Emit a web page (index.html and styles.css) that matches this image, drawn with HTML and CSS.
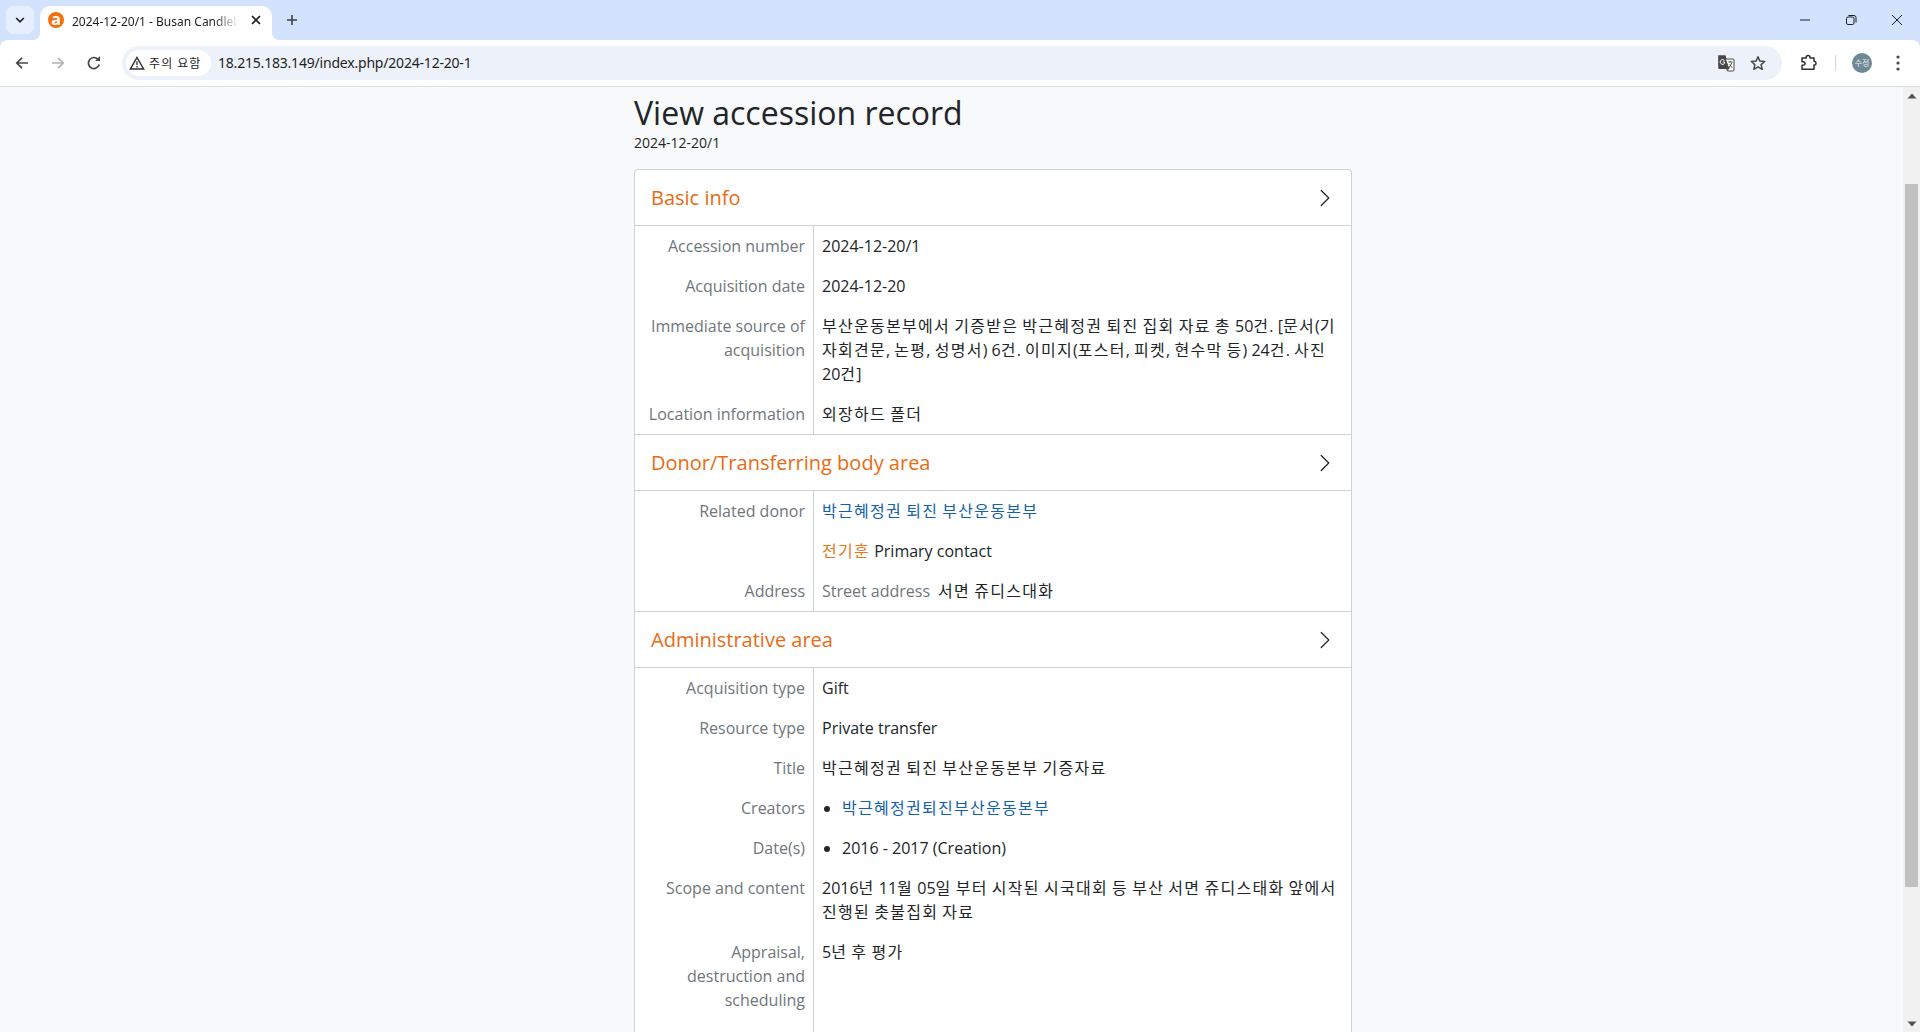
FILE: index.html
```html
<!DOCTYPE html>
<html lang="ko">
<head>
<meta charset="utf-8">
<title>2024-12-20/1 - Busan Candlelight</title>
<link rel="stylesheet" href="styles.css">
</head>
<body>
<header class="browser">
  <div class="tabstrip">
    <button class="tab-search" aria-label="탭 검색">
      <svg width="12" height="12" viewBox="0 0 12 12"><path d="M2.2 4 6 7.8 9.8 4" fill="none" stroke="#1f1f1f" stroke-width="1.7"/></svg>
    </button>
    <div class="tab">
      <span class="favicon">a</span>
      <span class="tab-title">2024-12-20/1 - Busan Candleli</span>
      <svg class="tab-close" width="12" height="12" viewBox="0 0 12 12"><path d="M2 2 10 10M10 2 2 10" stroke="#1f1f1f" stroke-width="1.7"/></svg>
    </div>
    <svg class="new-tab" width="14" height="14" viewBox="0 0 14 14"><path d="M7 2V12M2 7H12" stroke="#3c4043" stroke-width="1.6"/></svg>
    <div class="window-controls">
      <svg width="12" height="12" viewBox="0 0 12 12"><path d="M1 6H11" stroke="#1f1f1f" stroke-width="1"/></svg>
      <svg width="12" height="12" viewBox="0 0 12 12"><rect x="1.5" y="3" width="7.5" height="7.5" rx="1.5" fill="none" stroke="#1f1f1f"/><path d="M3.5 1.5H9Q11 1.5 11 3.5V8.5" fill="none" stroke="#1f1f1f"/></svg>
      <svg width="14" height="14" viewBox="0 0 14 14"><path d="M2 2 12 12M12 2 2 12" stroke="#1f1f1f" stroke-width="1"/></svg>
    </div>
  </div>
  <div class="toolbar">
    <div class="nav-buttons">
      <svg width="16" height="16" viewBox="0 0 16 16"><path d="M14 8H3M8 2.8 2.8 8 8 13.2" fill="none" stroke="#474747" stroke-width="1.7"/></svg>
      <svg width="16" height="16" viewBox="0 0 16 16"><path d="M2 8H13M8 2.8 13.2 8 8 13.2" fill="none" stroke="#b0b3b6" stroke-width="1.7"/></svg>
      <svg width="16" height="16" viewBox="0 0 16 16"><path d="M13.2 9.6A5.5 5.5 0 1 1 12 4.3" fill="none" stroke="#474747" stroke-width="1.7"/><path d="M9.2 5.9H14V1.1Z" fill="#474747"/></svg>
    </div>
    <div class="omnibox">
      <div class="chip">
        <svg width="16" height="14" viewBox="0 0 16 14"><path d="M8 1.5 14.6 13H1.4Z" fill="none" stroke="#303030" stroke-width="1.5"/><path d="M8 5.3V9M8 10V11.5" stroke="#303030" stroke-width="1.3"/></svg>
        <span class="chip-text">주의 요함</span>
      </div>
      <span class="url">18.215.183.149/index.php/2024-12-20-1</span>
      <div class="omni-actions">
        <svg width="18" height="18" viewBox="0 0 18 18"><path d="M1.2 1.2H8.5L12 15H2.5Q1.2 15 1.2 13.7Z" fill="#474747"/><path d="M8.3 5H16Q17 5 17 6V16Q17 17 16 17H10.5L9.8 15H12Z" fill="#fff" stroke="#474747"/><path d="M7.5 6.5A2.4 2.4 0 1 0 7.6 9.3V8H5.6" fill="none" stroke="#fff" stroke-width="1"/><path d="M11.2 8H15.5M13.3 7V8.2M12 14 15 8.5M12.6 10.5 15.3 14" fill="none" stroke="#474747" stroke-width=".9"/></svg>
        <svg width="16" height="16" viewBox="0 0 16 16"><path d="M8 1.7 9.9 6.1 14.7 6.5 11.1 9.6 12.2 14.3 8 11.8 3.8 14.3 4.9 9.6 1.3 6.5 6.1 6.1Z" fill="none" stroke="#474747" stroke-width="1.5" stroke-linejoin="round"/></svg>
      </div>
    </div>
    <div class="tool-actions">
      <svg class="ext" width="18" height="18" viewBox="0 0 18 18"><path d="M2 4H6.2V3.4A1.9 1.9 0 0 1 10 3.4V4H14V7.3H14.6A1.9 1.9 0 0 1 14.6 11H14V15.2H2V11.3H3.2A1.8 1.8 0 0 0 3.2 7.7H2Z" fill="none" stroke="#303030" stroke-width="1.5" stroke-linejoin="round"/></svg>
      <span class="separator"></span>
      <span class="avatar">수정</span>
      <svg width="4" height="16" viewBox="0 0 4 16"><circle cx="2" cy="2" r="1.6" fill="#474747"/><circle cx="2" cy="8" r="1.6" fill="#474747"/><circle cx="2" cy="14" r="1.6" fill="#474747"/></svg>
    </div>
  </div>
</header>

<div class="viewport">
  <main class="page">
    <div class="content">
      <h1 class="page-title">View accession record</h1>
      <div class="page-sub">2024-12-20/1</div>

      <div class="card">
        <section class="area">
          <div class="area-head">
            <h2>Basic info</h2>
            <svg class="chev" width="20" height="20" viewBox="0 0 16 16"><path fill="#212529" d="M4.646 1.646a.5.5 0 0 1 .708 0l6 6a.5.5 0 0 1 0 .708l-6 6a.5.5 0 0 1-.708-.708L10.293 8 4.646 2.354a.5.5 0 0 1 0-.708z"/></svg>
          </div>
          <div class="row"><div class="label">Accession number</div><div class="value">2024-12-20/1</div></div>
          <div class="row"><div class="label">Acquisition date</div><div class="value">2024-12-20</div></div>
          <div class="row"><div class="label">Immediate source of acquisition</div><div class="value"><span class="ko">부산운동본부에서 기증받은 박근혜정권 퇴진 집회 자료 총</span> 50<span class="ko">건</span>. [<span class="ko">문서</span>(<span class="ko">기자회견문</span>, <span class="ko">논평</span>, <span class="ko">성명서</span>) 6<span class="ko">건</span>. <span class="ko">이미지</span>(<span class="ko">포스터</span>, <span class="ko">피켓</span>, <span class="ko">현수막 등</span>) 24<span class="ko">건</span>. <span class="ko">사진</span> 20<span class="ko">건</span>]</div></div>
          <div class="row"><div class="label">Location information</div><div class="value"><span class="ko">외장하드 폴더</span></div></div>
        </section>

        <section class="area">
          <div class="area-head">
            <h2>Donor/Transferring body area</h2>
            <svg class="chev" width="20" height="20" viewBox="0 0 16 16"><path fill="#212529" d="M4.646 1.646a.5.5 0 0 1 .708 0l6 6a.5.5 0 0 1 0 .708l-6 6a.5.5 0 0 1-.708-.708L10.293 8 4.646 2.354a.5.5 0 0 1 0-.708z"/></svg>
          </div>
          <div class="row"><div class="label">Related donor</div><div class="value"><a class="link ko" href="#">박근혜정권 퇴진 부산운동본부</a></div></div>
          <div class="row"><div class="label"></div><div class="value"><span class="contact ko">전기훈</span> Primary contact</div></div>
          <div class="row"><div class="label">Address</div><div class="value address"><span class="sub-label">Street address</span><span class="ko">서면 쥬디스대화</span></div></div>
        </section>

        <section class="area">
          <div class="area-head">
            <h2>Administrative area</h2>
            <svg class="chev" width="20" height="20" viewBox="0 0 16 16"><path fill="#212529" d="M4.646 1.646a.5.5 0 0 1 .708 0l6 6a.5.5 0 0 1 0 .708l-6 6a.5.5 0 0 1-.708-.708L10.293 8 4.646 2.354a.5.5 0 0 1 0-.708z"/></svg>
          </div>
          <div class="row"><div class="label">Acquisition type</div><div class="value">Gift</div></div>
          <div class="row"><div class="label">Resource type</div><div class="value">Private transfer</div></div>
          <div class="row"><div class="label">Title</div><div class="value"><span class="ko">박근혜정권 퇴진 부산운동본부 기증자료</span></div></div>
          <div class="row"><div class="label">Creators</div><div class="value"><ul class="bullets"><li><a class="link ko" href="#">박근혜정권퇴진부산운동본부</a></li></ul></div></div>
          <div class="row"><div class="label">Date(s)</div><div class="value"><ul class="bullets"><li>2016 - 2017 (Creation)</li></ul></div></div>
          <div class="row"><div class="label">Scope and content</div><div class="value">2016<span class="ko">년</span> 11<span class="ko">월</span> 05<span class="ko">일 부터 시작된 시국대회 등 부산 서면 쥬디스태화 앞에서 진행된 촛불집회 자료</span></div></div>
          <div class="row"><div class="label">Appraisal, destruction and scheduling</div><div class="value">5<span class="ko">년 후 평가</span></div></div>
          <div class="row row-tail"><div class="label"></div><div class="value"></div></div>
        </section>
      </div>
    </div>
  </main>
  <aside class="scrollbar">
    <div class="arrow"><svg width="10" height="6" viewBox="0 0 10 6"><path d="M5 .5 9.5 5.5H.5Z" fill="#505050"/></svg></div>
    <div class="thumb"></div>
    <div class="track-rest"></div>
    <div class="arrow"><svg width="10" height="6" viewBox="0 0 10 6"><path d="M5 5.5 9.5 .5H.5Z" fill="#505050"/></svg></div>
  </aside>
</div>
</body>
</html>
```

FILE: styles.css
```css
* { box-sizing: border-box; }
html, body { margin: 0; height: 100%; overflow: hidden; }
body {
  display: flex;
  flex-direction: column;
  height: 1032px;
  font-family: "Open Sans", "Noto Sans CJK KR", sans-serif;
  font-size: 16px;
  line-height: 24px;
  color: #212529;
  background: #f8f9fa;
}
svg { display: block; flex: none; }

/* browser chrome */
.browser { flex: none; height: 87px; background: #d3e3fd; }
.tabstrip { height: 40px; display: flex; align-items: flex-end; padding-left: 6px; }
.tab-search {
  width: 28px; height: 28px; margin-bottom: 6px; padding: 0; border: 0; border-radius: 8px;
  background: #e6effd; display: flex; align-items: center; justify-content: center;
}
.tab {
  position: relative; z-index: 1;
  width: 232px; height: 34px; margin-left: 6px;
  background: #fff; border-radius: 10px 10px 0 0;
  display: flex; align-items: center; padding: 0 10px 6px 8px;
}
.tab::before, .tab::after {
  content: ""; position: absolute; bottom: 0; width: 8px; height: 8px;
}
.tab::before { left: -8px; background: radial-gradient(circle at 0 0, transparent 8px, #fff 8.5px); }
.tab::after { right: -8px; background: radial-gradient(circle at 100% 0, transparent 8px, #fff 8.5px); }
.favicon {
  flex: none; width: 16px; height: 16px; border-radius: 50%;
  background: #f0700f; color: #fff;
  font: 700 16px/15px "Open Sans", sans-serif; text-align: center;
}
.tab-title {
  flex: 1; min-width: 0; margin: 3px 0 0 8px; white-space: nowrap; overflow: hidden;
  font: 12px/16px "Noto Sans", "Open Sans", sans-serif; color: #1f1f1f;
  -webkit-mask-image: linear-gradient(90deg, #000 85%, transparent 100%);
  mask-image: linear-gradient(90deg, #000 85%, transparent 100%);
}
.tab-close { margin-left: 11px; }
.new-tab { margin: 0 0 13px 13px; }
.window-controls {
  margin-left: auto; height: 40px; width: 121px; padding: 0 16px 0 0;
  display: flex; align-items: center; justify-content: space-between;
}

.toolbar {
  height: 47px; background: #fff; border-bottom: 1px solid #dcdee1;
  border-radius: 8px 8px 0 0;
  display: flex; align-items: center; padding: 0 20px 1px 14px;
}
.nav-buttons { flex: none; display: flex; gap: 20px; width: 108px; }
.omnibox {
  flex: 1; min-width: 0; height: 34px; border-radius: 17px; background: #edf2fa;
  display: flex; align-items: center; padding: 0 16px 0 4px;
}
.chip {
  flex: none; width: 85px; height: 26px; border-radius: 13px; background: #fff;
  display: flex; align-items: center; gap: 4px; padding-left: 3px;
  font: 12px/16px "Noto Sans CJK KR", sans-serif; color: #1f1f1f;
}
.chip-text { letter-spacing: 1.1px; word-spacing: -.6px; }
.url {
  margin-left: 7px; font: 14px/18px "Noto Sans", "Open Sans", sans-serif; letter-spacing: -.2px; color: #1f1f1f;
}
.omni-actions { margin-left: auto; display: flex; align-items: center; gap: 15px; }
.tool-actions { flex: none; display: flex; align-items: center; margin-left: 18px; }
.separator { width: 1px; height: 16px; background: #c7d7f2; margin: 0 16px 0 17px; }
.avatar {
  width: 20px; height: 20px; border-radius: 50%; background: #6e8995; color: #e8eef0;
  font: 8px/20px "Noto Sans CJK KR", sans-serif; text-align: center; margin-right: 24px;
  white-space: nowrap; overflow: hidden;
}

/* page */
.viewport { flex: 1; min-height: 0; display: flex; }
.page { flex: 1; min-width: 0; overflow: hidden; }
.content { width: 718px; margin-left: 634px; padding-top: 7px; }
.page-title { margin: 0; font-size: 32px; line-height: 38px; font-weight: 400; }
.page-sub { font-size: 14px; line-height: 21px; margin-bottom: 16px; }

.card { background: #fff; border: 1px solid #cfd2d6; border-bottom: 0; border-radius: 4px 4px 0 0; }
.area + .area { border-top: 1px solid #cfd2d6; }
.area-head {
  height: 56px; border-bottom: 1px solid #cfd2d6;
  display: flex; align-items: center; justify-content: space-between; padding: 0 16px;
}
.area-head h2 { margin: 0; font-size: 20px; line-height: 24px; font-weight: 400; color: #e96b14; }
.row { display: flex; }
.label {
  flex: none; width: 179px; padding: 8px; border-right: 1px solid #cfd2d6;
  text-align: right; color: #6f767c;
}
.value { flex: 1; min-width: 0; padding: 8px; }
.ko { letter-spacing: 1.28px; word-spacing: -1.3px; }
.address { display: flex; gap: 8px; }
.sub-label { color: #6f767c; }
.link { color: #1261ab; text-decoration: none; }
.contact { color: #e8791c; }
.bullets { margin: 0; padding: 0 0 0 20px; }
.row-tail { height: 120px; }

/* scrollbar */
.scrollbar { flex: none; width: 17px; background: #f1f1f1; display: flex; flex-direction: column; }
.arrow { flex: none; height: 17px; display: flex; align-items: center; justify-content: center; }
.thumb { flex: none; height: 703px; margin: 80px 2px 0 2px; background: #c1c1c1; }
.track-rest { flex: 1; }
```
